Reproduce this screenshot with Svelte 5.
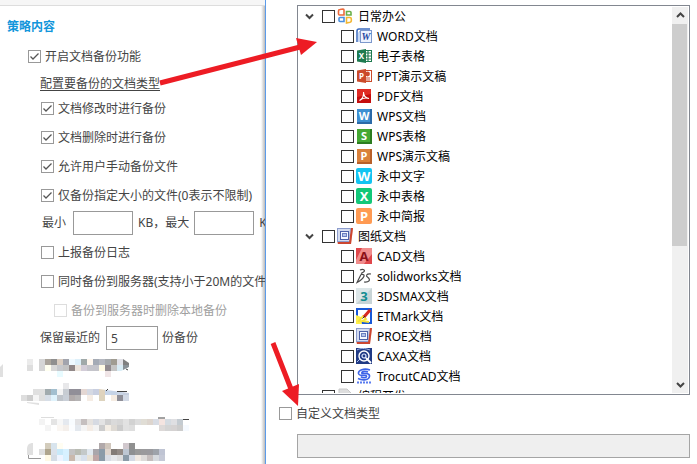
<script>
	let minSize = $state('');
	let maxSize = $state('');
	let keepCount = $state('5');

	const groups = [
		{
			name: '日常办公',
			icon: 'office',
			items: [
				['WORD文档', 'word'],
				['电子表格', 'excel'],
				['PPT演示文稿', 'ppt'],
				['PDF文档', 'pdf'],
				['WPS文档', 'wpsW'],
				['WPS表格', 'wpsS'],
				['WPS演示文稿', 'wpsP'],
				['永中文字', 'yzW'],
				['永中表格', 'yzX'],
				['永中简报', 'yzP']
			]
		},
		{
			name: '图纸文档',
			icon: 'drawing',
			items: [
				['CAD文档', 'cad'],
				['solidworks文档', 'solid'],
				['3DSMAX文档', 'max'],
				['ETMark文档', 'etmark'],
				['PROE文档', 'drawing'],
				['CAXA文档', 'caxa'],
				['TrocutCAD文档', 'trocut']
			]
		},
		{ name: '编程开发', icon: 'code', items: [] }
	];

	// letter tiles: letter, fill, edge, inset, corner radius
	const tiles = {
		wpsW: ['W', '#3d8fd2', '#2b6aa8', 1, 0],
		wpsS: ['S', '#45a832', '#2c7d20', 1, 0],
		wpsP: ['P', '#d9803a', '#b8602a', 1, 0],
		yzW: ['W', '#12c4f2', '#12c4f2', 0, 2],
		yzX: ['X', '#12c878', '#12c878', 0, 2],
		yzP: ['P', '#ff9a52', '#ff9a52', 0, 2]
	};

	// masked lines, 6px blocks: x, y, colours ('' leaves a gap)
	const mosaic = [
		[27, 6, 'ebebeb,,d5d5d5,aaa49b,8f8f8f,d9ccc0,a2a4ad,f0faff,def0fa,a0a9a9,fff7ee,a5abb5,b5b8c0,a6aaad,a09c92,e2e2e8,808080'],
		[27, 12, 'dedede,,d5d5d5,fffff0,d8d8d8,c6c8cc,c3c3c3,918888,ede5dd,d3cdd8,c5c5cb,c4c4ca,fffbe5,918b8f,c5c5c5,d8ecf5,8a9298'],
		[57, 18, 'e8fbff'],
		[105, 18, 'f0e5e6'],
		[63, 30, 'e8e8ea'],
		[33, 36, 'e0e0e0,e0e0e0,a1abae,a3bfcf,f3f3f3,c7ccd2,918f98,918f98,e4d7d3,d5d9e3,c9cfe0,dfd3be,c7d5e8,c5d3e6,c9d5e6,c5cede'],
		[21, 42, 'dedede,cdcdcd,f5f5f5,dedede,d7dee7,e0f3fc,bfc4ca,c9cfd7,b1abab,b5b3b4,ffffff,f5ece4,ffffff,ddd3bd,ffffff,f5ece2,8f8f98,d2d9e5'],
		[39, 66, 'f3f3f3,ffffff,e4e4e4,f7f7f7,e5e9ef,f8fcff,e2e2e4,c5bfbf,e5e2df,d6dae2,e3e3e3,cfcfcf,dadada,d6d6d6,e2e2e2,d2d2d2,dddddd,e0ddd5,ddd5ce,d8dce4,f4e4e0,d5dbe1,dfdfe2,c4cbd1'],
		[45, 72, 'f4f4f4,ffffff,faf6f2,f4efeb,fbfdff,e3e8ee,f5f5f5,f4ece5,f3f3f3,cccccc,f4eee5,dedad4,cccccc,e1e1e1,dedede,,,,,ddd9d8,d4d4d4,d5d2d2,cccccc,f6faff'],
		[45, 90, 'd3ccbc,d8e4ed,fffdf2,,,,,,,b1a9aa,d0c6bc,,,d1c8cd,909090'],
		[27, 96, 'e0e0e0,,dedede,afa58d,dbe2eb,c8e9f9,d7f1ff,c3c3c3,b9bcb3,c4c9c9,e1e8ef,a9a6ab,8b9ba8,dfd5cd,837c77,938b86,bec7d2,8e9092,999999,9a9a9c,9a9a9e,9ea3aa,bfc4d3'],
		[45, 102, 'fff9e5,d5dde6,eef4ff,d8f1ff,c9b9ad,e4eaec,d8e1ed,e8e2d5,bfa6a6,8b9ba8,dadee5,e6e8eb,dedede,8b9ba8,d4dae5,f0e9e2,dddbd9,c5bebd,d6dade,c5c9d6']
	];
	const blocks = mosaic.flatMap(([x, y, row]) =>
		row.split(',').map((color, i) => ({ x: x + i * 6, y, color })).filter((b) => b.color)
	);
</script>

{#snippet option(label, checked = false, level = '', disabled = false)}
	<label class="option {level}" class:disabled>
		<input type="checkbox" {checked} {disabled} />
		<span>{label}</span>
	</label>
{/snippet}

{#snippet icon(name)}
	<svg class="icon" viewBox="0 0 16 16" aria-hidden="true">
		{#if tiles[name]}
			{@const [letter, fill, edge, inset, radius] = tiles[name]}
			<rect x={inset} y={inset} width={16 - inset * 2} height={16 - inset * 2} rx={radius} {fill} />
			{#if inset}
				<path d="M1 15H15V1" fill="none" stroke={edge} stroke-width="2" />
			{/if}
			<text x="8" y={inset ? 12 : 13} font-size={inset ? 11 : 13} fill="#fff">{letter}</text>
		{:else if name === 'office'}
			<g fill="none" stroke-width="1.6">
				<path d="M7 7H2.5Q1.5 7 1.5 6V3Q1.5 1.5 3 1.5L6 1Q7 1 7 2Z" stroke="#ec6a3c" />
				<path d="M9.5 7V3.5H13Q14 3.5 14 4.5V7Z" stroke="#6ab04a" />
				<path d="M7 9.5H3Q2 9.5 2 10.5V12.5Q2 13.5 3 13.5H7Z" stroke="#4a8fe0" />
				<path d="M9.5 9.5H13Q14.3 9.5 14.3 11V13Q14.3 14 13 14.3L9.5 15Z" stroke="#f2b632" />
			</g>
		{:else if name === 'word'}
			<path d="M1 14V3Q1 1 3 1H14" fill="none" stroke="#3c6cc0" stroke-width="1.5" />
			<path d="M3 14V5Q3 3 5 3" fill="none" stroke="#8cb0e8" />
			<rect x="4.5" y="2.5" width="11" height="12" fill="#edf3ff" stroke="#7c98cc" />
			<text class="serif" x="10" y="12" font-size="10" fill="#2548a0">W</text>
		{:else if name === 'excel' || name === 'ppt'}
			{@const color = name === 'excel' ? '#1e7b50' : '#cb4a2a'}
			<rect x="8.5" y="2.5" width="7" height="11" fill="#fff" stroke={color} />
			{#if name === 'excel'}
				<path d="M9 5H15M9 8H15M9 11H15M12 3V13" stroke={color} stroke-width="1.2" />
			{:else}
				<circle cx="11.5" cy="6" r="2.4" fill={color} />
				<path d="M9 10H14M9 12H14" stroke={color} />
			{/if}
			<path d="M1 2.5L10 1V15L1 13.5Z" fill={color} />
			<text x="5.5" y="11" font-size="8" fill="#fff">{name === 'excel' ? 'X' : 'P'}</text>
		{:else if name === 'pdf'}
			<rect x="1" y="1" width="14" height="14" fill="#c40d0d" />
			<path d="M1 1H15V6L1 9Z" fill="#e02a24" />
			<path d="M3.5 12.5C6 11 8 7.5 7.5 4C7.5 8 10 10 13 10.5C9.5 9.3 6 10.5 3.5 12.5Z" fill="none" stroke="#fff" stroke-width="1.1" />
		{:else if name === 'drawing'}
			<path d="M0 1H16L14 16H1L0 15Z" fill="#e8b4a4" />
			<path d="M16 0L14 16H1L1 14H12L14 0Z" fill="#cc4630" />
			<path d="M0 0H14L12 14H0Z" fill="#8c9ccc" />
			<path d="M1 1H13L12 13H1Z" fill="#d4dcf0" />
			<rect x="3.5" y="3.5" width="8" height="8" fill="#f4f7ff" stroke="#4c60a8" />
			<rect x="5.5" y="5.5" width="4" height="3" fill="#b4c4ec" stroke="#6c80c0" />
		{:else if name === 'cad'}
			<rect width="16" height="16" fill="#f08c8c" />
			<path d="M0 0H6L0 12ZM16 6V16H8Z" fill="#e0474b" />
			<text x="8" y="13" font-size="13" fill="#8c1018">A</text>
		{:else if name === 'solid'}
			<g fill="none" stroke="#484848" stroke-width="1.2">
				<path d="M4 2C7 .5 10 2 7.5 4L5 5.5" />
				<path d="M5 6.5C10 5.5 9 10 1 14.5L5 6.5" />
				<path d="M15 6C10 5.5 9.5 8 12 9.5C15 12 13 14.5 8 14" />
			</g>
		{:else if name === 'max'}
			<rect width="16" height="16" fill="#dce6e8" />
			<path d="M0 16L16 0V16Z" fill="#c8d4d6" />
			<text x="8" y="13" font-size="13" fill="#138c91">3</text>
		{:else if name === 'etmark'}
			<rect x="1" y="1" width="14" height="14" fill="#fff" stroke="#1858d8" stroke-width="2" />
			<path d="M0 7L5 9L6 16H0Z" fill="#fff04a" />
			<path d="M2 14L7 8L10 11L6 13L13 14" fill="none" stroke="#f5e23c" stroke-width="1.8" />
			<path d="M8 9L14 2" stroke="#d82820" stroke-width="3" />
			<path d="M6.5 10.5L9 8" stroke="#303030" />
		{:else if name === 'caxa'}
			<rect width="16" height="16" fill="#203a84" />
			<path d="M1 2C4 0 9 0 14 2M1 14L4 11" fill="none" stroke="#a8bce8" />
			<circle cx="8" cy="8" r="5" fill="none" stroke="#fff" stroke-width="1.4" />
			<circle cx="8" cy="8" r="2" fill="#203a84" stroke="#dce6ff" stroke-width="1.2" />
			<path d="M10 10L15 15" stroke="#fff" stroke-width="2" />
		{:else if name === 'trocut'}
			<g fill="none" stroke="#3c64e8" stroke-width="1.6">
				<path d="M14 2C8 0 2 2 2.5 5.5C3 9 11 6 10.5 8.5C10 10.5 6 10 5 8.5" />
				<path d="M12 4C8 2.5 5 4 6 5.5C9 5.5 14 5 13.5 8.5C13 12 7 13 2 10.5" />
			</g>
			<path d="M1 14.5H15" stroke="#5a7cf0" stroke-width="2" stroke-dasharray="2 1" />
		{:else}
			<path d="M2 1H10L14 5V15H2Z" fill="#dedede" stroke="#c8c8c8" />
			<path d="M4 7H11" stroke="#a8a8a8" />
		{/if}
	</svg>
{/snippet}

<main>
	<section class="policy">
		<div class="topbar"></div>
		<h2>策略内容</h2>
		{@render option('开启文档备份功能', true, 'root')}
		<a class="types" href="#types">配置要备份的文档类型</a>
		{@render option('文档修改时进行备份', true)}
		{@render option('文档删除时进行备份', true)}
		{@render option('允许用户手动备份文件', true)}
		{@render option('仅备份指定大小的文件(0表示不限制)', true)}
		<div class="fields sizes">
			<label for="min">最小</label>
			<input id="min" type="text" bind:value={minSize} />
			<label for="max">KB，最大</label>
			<input id="max" type="text" bind:value={maxSize} />
			<span>KB</span>
		</div>
		{@render option('上报备份日志')}
		{@render option('同时备份到服务器(支持小于20M的文件)')}
		{@render option('备份到服务器时删除本地备份', false, 'sub', true)}
		<div class="fields keep">
			<label for="keep">保留最近的</label>
			<input id="keep" type="text" bind:value={keepCount} />
			<span>份备份</span>
		</div>
		<svg class="masked" viewBox="0 0 262 111" aria-hidden="true">
			{#each blocks as b}
				<rect x={b.x} y={b.y} width="6" height="6" fill={'#' + b.color} />
			{/each}
			<path d="M0 14L3 11V24H0ZM27 49L39 50V52L27 50Z" fill="#e0e0e0" />
			<path d="M27 96C27 92 29 90 33 90V102H27Z" fill="#e0e0e0" />
			<path d="M123 6H129V10ZM129 14L117 20H129ZM99 36L129 40V36Z" fill="#fff" />
			<path d="M126 16L128 17M106 38L108 36M117 38.5H127M158 65H165M183 66.5H189" stroke="#444" fill="none" />
			<path d="M41 64.5H54" stroke="#ddd" />
			<path d="M28.5 102V105.5H41" stroke="#999" fill="none" />
		</svg>
	</section>

	<section class="dialog">
		<div class="tree">
			<ul>
				{#each groups as group}
					<li>
						<div class="node">
							<svg class="chevron" viewBox="0 0 9 9" aria-hidden="true"><path d="M1 2.5L4.5 6L8 2.5" /></svg>
							<label>
								<input type="checkbox" />
								{@render icon(group.icon)}
								<span>{group.name}</span>
							</label>
						</div>
						{#each group.items as [name, kind]}
							<div class="node leaf">
								<label>
									<input type="checkbox" />
									{@render icon(kind)}
									<span>{name}</span>
								</label>
							</div>
						{/each}
					</li>
				{/each}
			</ul>
			<div class="scrollbar">
				<button aria-label="向上滚动"><svg viewBox="0 0 9 9"><path d="M1 6L4.5 2.5L8 6" /></svg></button>
				<div class="track"><div class="thumb"></div></div>
				<button aria-label="向下滚动"><svg viewBox="0 0 9 9"><path d="M1 3L4.5 6.5L8 3" /></svg></button>
			</div>
		</div>
		{@render option('自定义文档类型', false, 'custom')}
		<input class="custom-types" type="text" aria-label="自定义文档类型" disabled />
	</section>

	<svg class="arrows" viewBox="0 0 697 464" aria-hidden="true">
		<path d="M160 83L304 46M273 343L291 389" />
		<polygon points="317,42 296,38 301,55" />
		<polygon points="298,406 282,391 299,384" />
	</svg>
</main>

<style>
	:global(body) {
		margin: 0;
		background: #fff;
	}

	main {
		position: relative;
		display: grid;
		grid-template-columns: 265px 1fr;
		height: 100vh;
		overflow: hidden;
		font: 12px/16px "Noto Sans", "Noto Sans CJK SC", sans-serif;
		color: #444;
	}

	.policy {
		overflow: hidden;
		white-space: nowrap;
		background: linear-gradient(to left, #bbb, #eee 3px, #fff 4px);
	}

	.topbar {
		height: 5px;
		background: #f6f6f6;
		border-bottom: 1px solid #ddd;
	}

	h2 {
		margin: 0;
		padding: 6px 7px 0;
		font-size: 12px;
		line-height: 30px;
		color: #1296db;
	}

	.option {
		display: flex;
		align-items: center;
		gap: 4px;
		height: 29px;
		padding-left: 41px;
	}

	.root {
		padding-left: 28px;
	}

	.sub {
		padding-left: 54px;
	}

	.disabled {
		color: #a0a0a0;
	}

	input {
		box-sizing: border-box;
		margin: 0;
		font: inherit;
		color: inherit;
		border: 1px solid #999;
		border-radius: 0;
		background: #fff;
	}

	input[type="checkbox"] {
		appearance: none;
		flex: none;
		width: 13px;
		height: 13px;
	}

	input[type="checkbox"]:checked {
		background: url("data:image/svg+xml,%3Csvg xmlns='http://www.w3.org/2000/svg' viewBox='0 0 11 11'%3E%3Cpath d='M1.5 5.5L4 8L9.5 2.5' fill='none' stroke='%23555' stroke-width='1.3'/%3E%3C/svg%3E");
	}

	.disabled input[type="checkbox"] {
		border-color: #ddd;
	}

	.types {
		display: block;
		width: max-content;
		height: 23px;
		margin-left: 40px;
		line-height: 26px;
		color: inherit;
		text-underline-offset: 2px;
	}

	.fields {
		display: flex;
		align-items: center;
		height: 26px;
		padding-bottom: 2px;
	}

	.fields input {
		flex: none;
		width: 60px;
		height: 24px;
		padding: 0 4px;
	}

	.sizes {
		gap: 5px;
		padding-left: 42px;
	}

	.sizes label:first-child {
		margin-right: 2px;
	}

	.keep {
		gap: 4px;
		padding-left: 40px;
	}

	.keep label {
		margin-right: 2px;
	}

	.fields.keep input {
		width: 52px;
	}

	.masked {
		display: block;
		width: 262px;
		height: 111px;
	}

	.masked rect {
		shape-rendering: crispEdges;
	}

	.dialog {
		display: flex;
		flex-direction: column;
		box-sizing: border-box;
		min-width: 0;
		height: 100vh;
		padding: 5px 7px 6px 31px;
		border-left: 1px solid #5b9bea;
		background: #fff;
	}

	.tree {
		display: flex;
		flex: 1;
		min-height: 0;
		padding: 0 1px 1px 0;
		border: 1px solid #828790;
		color: #000;
	}

	ul {
		flex: 1;
		margin: 0;
		padding: 0;
		overflow: hidden;
		list-style: none;
	}

	.node {
		display: flex;
		align-items: center;
		gap: 8px;
		height: 20px;
		padding-left: 7px;
	}

	.leaf {
		padding-left: 43px;
	}

	.node label {
		display: flex;
		align-items: center;
		gap: 2px;
		white-space: nowrap;
	}

	.node input {
		border-color: #333;
	}

	.node span {
		margin-left: 3px;
		padding-top: 2px;
	}

	.icon {
		width: 16px;
		height: 16px;
	}

	.icon text {
		font-weight: 700;
		text-anchor: middle;
	}

	.icon .serif {
		font-family: "Liberation Serif", serif;
		font-style: italic;
	}

	.chevron,
	.scrollbar svg {
		width: 9px;
		height: 9px;
		fill: none;
		stroke: #444;
		stroke-width: 2;
	}

	.scrollbar {
		display: flex;
		flex-direction: column;
		width: 16px;
		margin-top: 1px;
		background: #f0f0f0;
	}

	.scrollbar button {
		display: grid;
		place-items: center;
		height: 17px;
		padding: 0;
		border: 0;
		background: none;
	}

	.track {
		flex: 1;
	}

	.thumb {
		width: 15px;
		height: 63%;
		background: #cdcdcd;
	}

	.custom {
		height: 37px;
		padding: 0 0 2px;
		margin-left: -18px;
	}

	.custom-types {
		width: 100%;
		height: 24px;
		border-color: #a5a5a5;
		background: #efefef;
	}

	.arrows {
		position: absolute;
		top: 0;
		left: 0;
		width: 697px;
		height: 464px;
		pointer-events: none;
		fill: #ed1c24;
	}

	.arrows path {
		stroke: #ed1c24;
		stroke-width: 5;
	}
</style>
